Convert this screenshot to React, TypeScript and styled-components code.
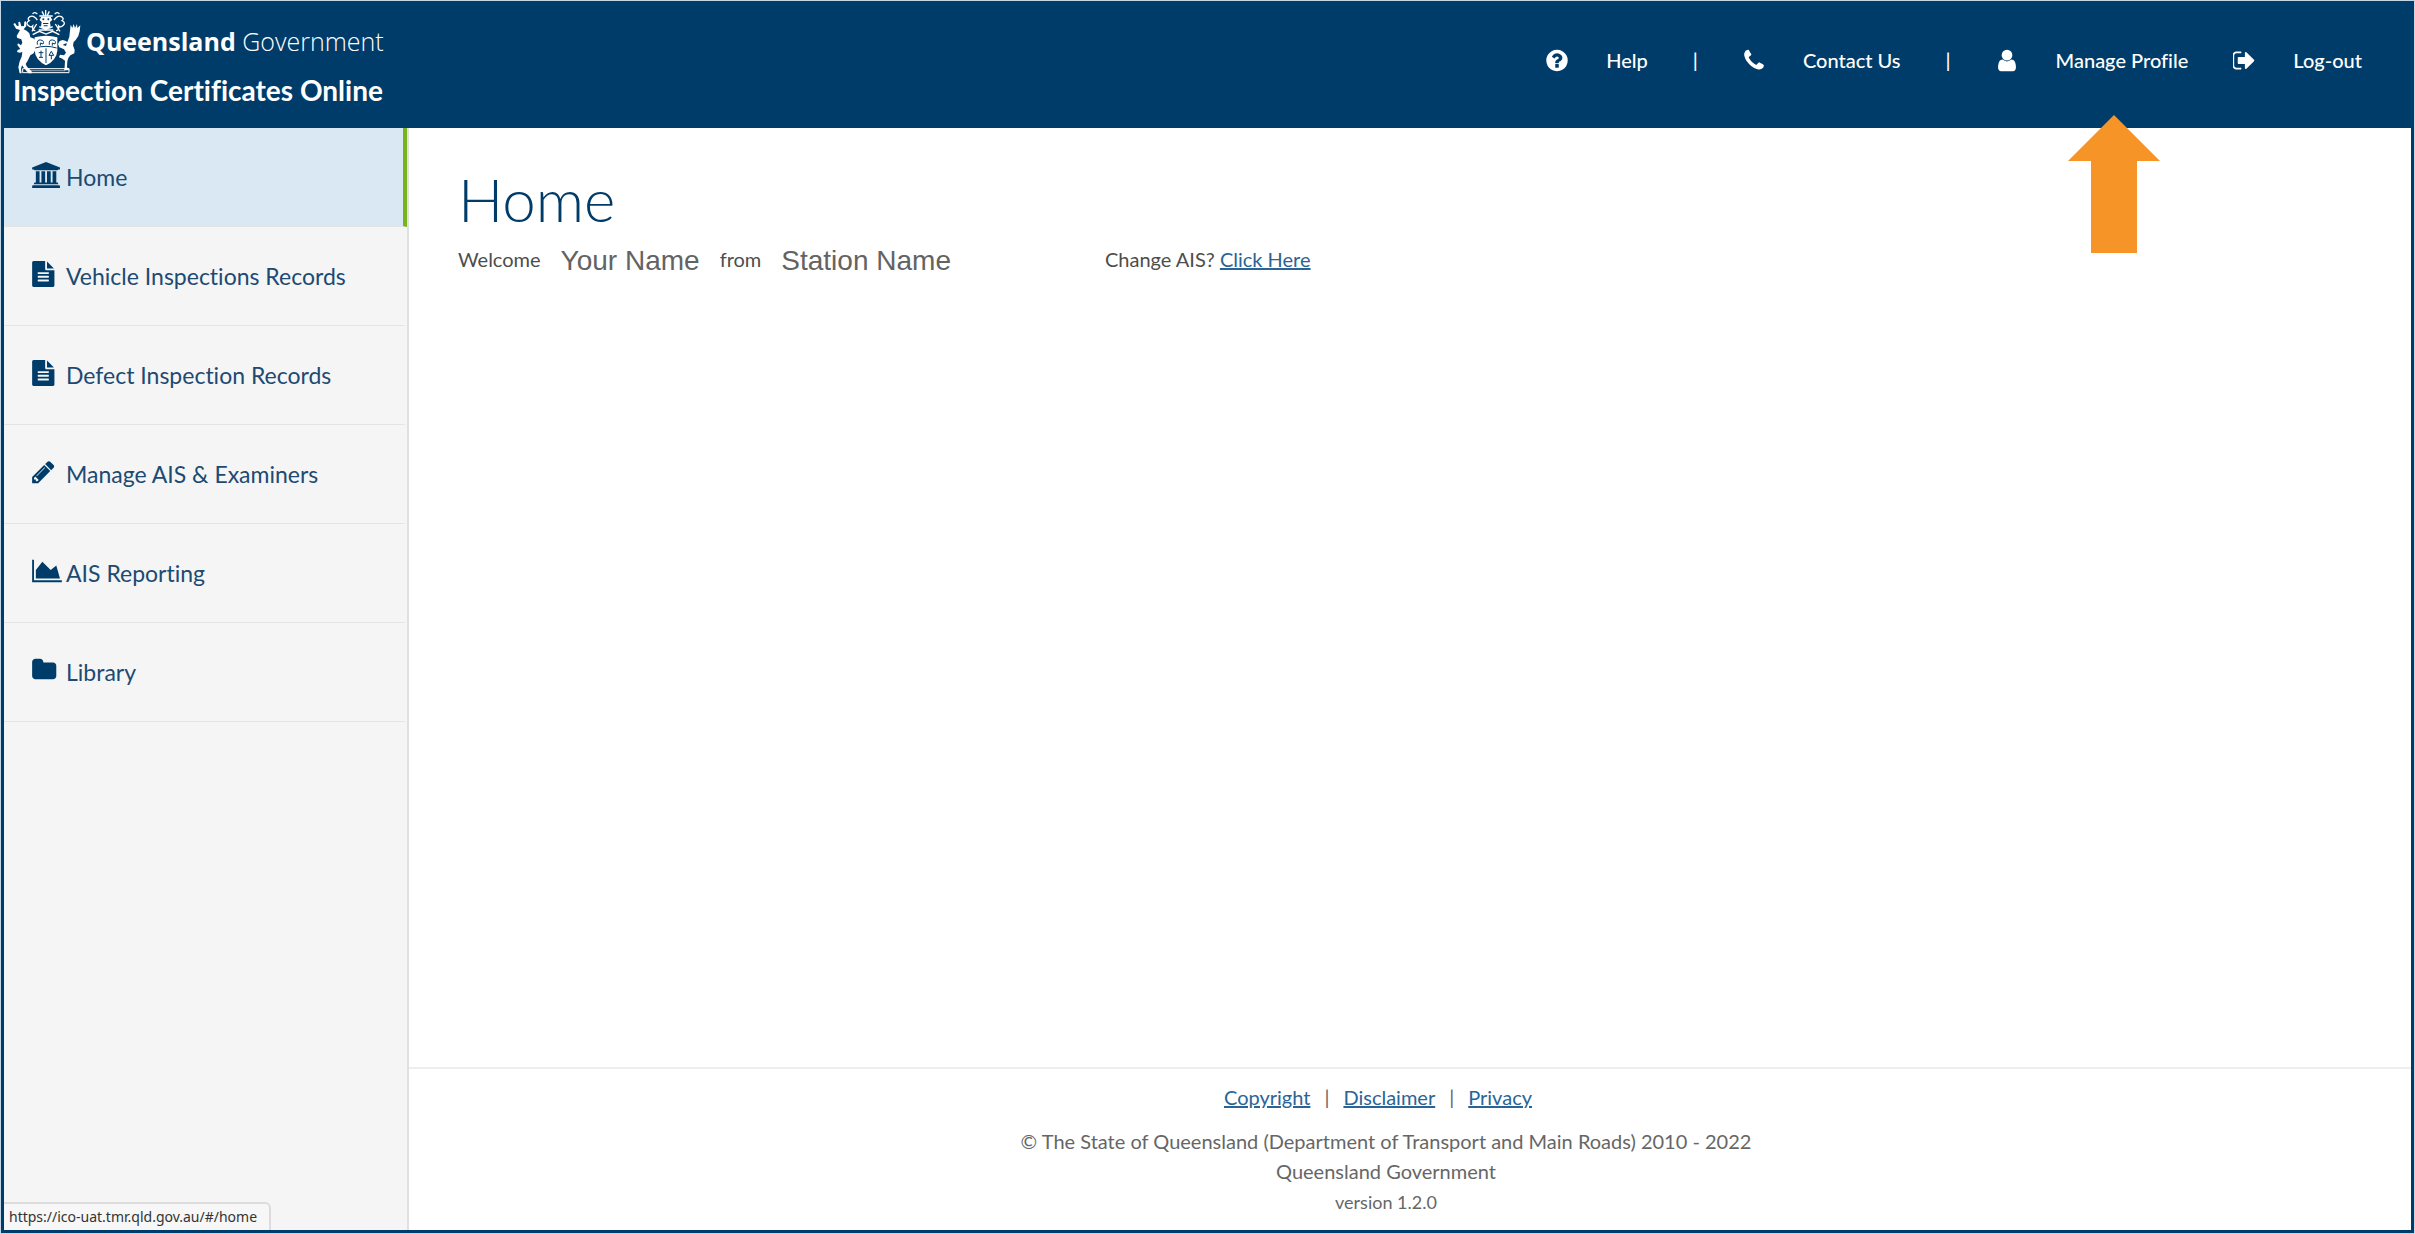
import React from "react";
import styled, { createGlobalStyle } from "styled-components";

const GlobalStyle = createGlobalStyle`
  *, *::before, *::after { box-sizing: border-box; }
  body {
    margin: 0;
    background: #ffffff;
    color: #4d4d4d;
    font-family: Lato, "Liberation Sans", sans-serif;
    font-size: 20px;
    line-height: 30px;
    font-variant-ligatures: none;
  }
`;

const navy = "#003c69";

const Page = styled.div`
  position: relative;
  display: flex;
  flex-direction: column;
  min-height: 100vh;
  border: 1px solid #c3d6e6;
  background: #ffffff;
`;

const Frame = styled.div`
  flex: 1;
  display: flex;
  flex-direction: column;
  border: 3px solid ${navy};
  border-top: 0;
`;

const Header = styled.header`
  display: flex;
  justify-content: space-between;
  align-items: flex-start;
  height: 127px;
  background: ${navy};
  color: #ffffff;
`;

const Brand = styled.div`
  padding: 6px 0 0 9px;
`;

const Logo = styled.div`
  display: flex;
  align-items: center;
  gap: 5px;
  font-family: "Open Sans", "Noto Sans", sans-serif;
  font-size: 25px;
  line-height: 68px;
  font-weight: 300;

  b { font-weight: 700; }
`;

const Product = styled.div`
  font-size: 28px;
  line-height: 30px;
  font-weight: 700;
`;

const Tools = styled.nav`
  display: flex;
  align-items: center;
  gap: 45px;
  padding: 44px 49px 0 0;
  font-weight: 500;
`;

const Tool = styled.a`
  display: flex;
  align-items: center;
  gap: 38px;
  color: #ffffff;
  text-decoration: none;
`;

const Body = styled.div`
  flex: 1;
  display: flex;
`;

const Sidebar = styled.nav`
  flex: 0 0 405px;
  background: #f5f5f5;
  border-right: 2px solid #e0e0e0;
`;

const Item = styled.a<{ $active?: boolean }>`
  display: flex;
  align-items: center;
  gap: 4px;
  height: 99px;
  padding-left: 28px;
  border-bottom: 1px solid #e4e4e4;
  border-right: 4px solid ${(p) => (p.$active ? "#76b41a" : "transparent")};
  background: ${(p) => (p.$active ? "#dae8f3" : "transparent")};
  color: #1c4a73;
  font-size: 23px;
  text-decoration: none;
`;

const ItemIcon = styled.svg`
  width: 30px;
  height: 26px;
  margin-bottom: 4px;
  fill: ${navy};
`;

const ToolIcon = styled.svg`
  width: 22px;
  height: 25px;
  fill: #ffffff;
`;

const Main = styled.div`
  flex: 1;
  display: flex;
  flex-direction: column;
`;

const Content = styled.main`
  flex: 1;
  padding: 33px 50px 0 49px;
`;

const Title = styled.h1`
  margin: 0;
  color: ${navy};
  font-size: 60px;
  line-height: 76px;
  font-weight: 300;
`;

const Welcome = styled.div`
  display: flex;
  align-items: center;
  gap: 20px;
  line-height: 40px;
`;

const Name = styled.span`
  padding-top: 4px;
  color: #636363;
  font-family: "Liberation Sans", sans-serif;
  font-size: 28px;
`;

const Change = styled.span`
  margin-left: 134px;
`;

const Link = styled.a`
  color: #2a6496;
  text-decoration: underline;
`;

const Footer = styled.footer`
  display: flex;
  flex-direction: column;
  align-items: center;
  padding: 13px 48px 12px 0;
  border-top: 2px solid #eeeeee;
  color: #666666;
`;

const Links = styled.div`
  display: flex;
  gap: 14px;
  padding-right: 16px;
  margin-bottom: 14px;
`;

const Version = styled.small`
  font-size: 18px;
  line-height: 32px;
`;

const Status = styled.div`
  position: absolute;
  left: 3px;
  bottom: 3px;
  padding: 0 12px 0 5px;
  border: 2px solid #dcdcdc;
  border-width: 2px 2px 0 0;
  border-top-right-radius: 6px;
  background: #f7f7f7;
  color: #333333;
  font-family: "Noto Sans", "Open Sans", sans-serif;
  font-size: 14px;
  line-height: 26px;
`;

const Pointer = styled.svg`
  position: absolute;
  top: 114px;
  right: 254px;
  width: 92px;
  height: 138px;
  fill: #f79428;
`;

const docPath =
  "M1596 476q14 14 28 36h-472v-472q22 14 36 28zm-476 164h544v1056q0 40-28 68t-68 28h-1344q-40 0-68-28t-28-68v-1600q0-40 28-68t68-28h800v544q0 40 28 68t68 28zm160 736v-64q0-14-9-23t-23-9h-704q-14 0-23 9t-9 23v64q0 14 9 23t23 9h704q14 0 23-9t9-23zm0-256v-64q0-14-9-23t-23-9h-704q-14 0-23 9t-9 23v64q0 14 9 23t23 9h704q14 0 23-9t9-23zm0-256v-64q0-14-9-23t-23-9h-704q-14 0-23 9t-9 23v64q0 14 9 23t23 9h704q14 0 23-9t9-23z";

const items = [
  {
    label: "Home",
    x: 0,
    d: "M960 0l960 384v128h-128q0 26-20.5 45t-48.5 19h-1526q-28 0-48.5-19t-20.5-45h-128v-128zM256 640h256v768h128v-768h256v768h128v-768h256v768h128v-768h256v768h59q28 0 48.5 19t20.5 45v64h-1664v-64q0-26 20.5-45t48.5-19h59v-768zM1851 1600q28 0 48.5 19t20.5 45v128h-1920v-128q0-26 20.5-45t48.5-19h1782z",
  },
  { label: "Vehicle Inspections Records", x: 128, d: docPath },
  { label: "Defect Inspection Records", x: 128, d: docPath },
  {
    label: "Manage AIS & Examiners",
    x: 128,
    d: "M491 1536l91-91-235-235-91 91v107h128v128h107zm523-928q0-22-22-22-10 0-17 7l-542 542q-7 7-7 17 0 22 22 22 10 0 17-7l542-542q7-7 7-17zm-54-192l416 416-832 832h-416v-416zm683 96q0 53-37 90l-166 166-416-416 166-165q36-38 90-38 53 0 91 38l235 234q37 39 37 91z",
  },
  {
    label: "AIS Reporting",
    x: 0,
    d: "M2048 1536v128h-2048v-1536h128v1408h1920zm-384-1024l256 896h-1664v-576l448-576 576 576z",
  },
  {
    label: "Library",
    x: 64,
    d: "M1728 608v704q0 92-66 158t-158 66h-1216q-92 0-158-66t-66-158v-960q0-92 66-158t158-66h320q92 0 158 66t66 158v32h672q92 0 158 66t66 158z",
  },
];

const tools = [
  {
    label: "Help",
    divider: true,
    d: "M1024 1376v-192q0-14-9-23t-23-9h-192q-14 0-23 9t-9 23v192q0 14 9 23t23 9h192q14 0 23-9t9-23zm256-672q0-88-55.5-163t-138.5-116-170-41q-243 0-371 213-15 24 8 42l132 100q7 6 19 6 16 0 25-12 53-68 86-92 34-24 86-24 48 0 85.5 26t37.5 59q0 38-20 61t-68 45q-63 28-115.5 86.5t-52.5 125.5v36q0 14 9 23t23 9h192q14 0 23-9t9-23q0-19 21.5-49.5t54.5-49.5q32-18 49-28.5t46-35 44.5-48 28-60.5 12.5-81zm384 192q0 209-103 385.5t-279.5 279.5-385.5 103-385.5-103-279.5-279.5-103-385.5 103-385.5 279.5-279.5 385.5-103 385.5 103 279.5 279.5 103 385.5z",
  },
  {
    label: "Contact Us",
    divider: true,
    d: "M1600 1240q0 27-10 70.5t-21 68.5q-21 50-122 106-94 51-186 51-27 0-53-3.5t-57.5-12.5-47-14.5-55.5-20.5-49-18q-98-35-175-83-127-79-264-216t-216-264q-48-77-83-175-3-9-18-49t-20.5-55.5-14.5-47-12.5-57.5-3.5-53q0-92 51-186 56-101 106-122 25-11 68.5-21t70.5-10q14 0 21 3 18 6 53 76 11 19 30 54t35 63.5 31 53.5q3 4 17.5 25t21.5 35.5 7 28.5q0 20-28.5 50t-62 55-62 53-28.5 46q0 9 5 22.5t8.5 20.5 14 24 11.5 19q76 137 174 235t235 174q2 1 19 11.5t24 14 20.5 8.5 22.5 5q18 0 46-28.5t53-62 55-62 50-28.5q14 0 28.5 7t35.5 21.5 25 17.5q25 15 53.5 31t63.5 35 54 30q70 35 76 53 3 7 3 21z",
  },
  {
    label: "Manage Profile",
    divider: false,
    d: "M1536 1399q0 109-62.5 187t-150.5 78h-854q-88 0-150.5-78t-62.5-187q0-85 8.5-160.5t31.5-152 58.5-131 94-89 134.5-34.5q131 128 313 128t313-128q76 0 134.5 34.5t94 89 58.5 131 31.5 152 8.5 160.5zm-256-887q0 159-112.5 271.5t-271.5 112.5-271.5-112.5-112.5-271.5 112.5-271.5 271.5-112.5 271.5 112.5 112.5 271.5z",
  },
  {
    label: "Log-out",
    divider: false,
    d: "M704 1440q0 4 1 20t.5 26.5-3 23.5-10 19.5-20.5 6.5h-320q-119 0-203.5-84.5t-84.5-203.5v-704q0-119 84.5-203.5t203.5-84.5h320q13 0 22.5 9.5t9.5 22.5q0 4 1 20t.5 26.5-3 23.5-10 19.5-20.5 6.5h-320q-66 0-113 47t-47 113v704q0 66 47 113t113 47h312l11.5 1 11.5 3 8 5.5 7 9 2 13.5zm928-544q0 26-19 45l-544 544q-19 19-45 19t-45-19-19-45v-288h-448q-26 0-45-19t-19-45v-384q0-26 19-45t45-19h448v-288q0-26 19-45t45-19 45 19l544 544q19 19 19 45z",
  },
];

/* State coat of arms: red deer and brolga holding the shield, helm above, scroll below. */
const CoatOfArms = () => (
  <svg width="68" height="65" viewBox="41 21 204 195" fill="#fff" aria-hidden="true">
    {/* deer */}
    <path d="M62 84l-12-4-8-14 5-3 6 9 5-1-1-11 5-1 4 14 8-1 1-13 5-1 1 14-8 10 9 4 8 8 3 12 12 4 4 8v22l-6 14-10 6-8 16-6 10 4 8 14 14v6h-9l-14-16-6-8-3 10 2 14h-6l-4-18 4-18 6-14 2-14-8 2-8-2 2-6 8-3-9-12 2-5 9 6 4-8-3-10-12-4-2-6z" />
    {/* brolga */}
    <path d="M214 68l5 10 4-12 4 12 6-12 1 12 9-8-2 18-4 14-8 12-6 6-2 10 5 14-1 10-12 6-6 8-3 10-1 18 9 9h-18l2-9 1-20-8-6-10-4 3-8 12 2 6-8-6-10-14-6-4-10 5-9 9-3 10 3 6 6-10 2-6 4 10 3 4-12 6-16z" />
    {/* crest and mantling */}
    <g fill="none" stroke="#fff" strokeWidth="4">
      <path d="M114 54q-12-16-22-10t-2 12q-12 6-4 14t14 2q-2 14 8 14M164 54q12-16 22-10t2 12q12 6 4 14t-14 2q2 14-8 14" />
      <path d="M114 36q-10-8-14 0M166 36q10-8 14 0M112 66l-14 22M168 66l14 22M100 98l20-10 20 8 20-8 20 10" />
      <path d="M139 24v18M128 28l6 12M150 28l-6 12M120 42l40 0M122 52q18 10 36 0M120 74q20 12 40 0M118 84l44 0" />
    </g>
    <path d="M126 44h28l4 10-6 6 2 14-15 12-14-12 2-14-6-6z" />
    <g fill={navy}>
      <circle cx="132" cy="52" r="3" />
      <circle cx="147" cy="52" r="3" />
      <path d="M131 63h16v3h-16zM133 70h12v3h-12z" />
    </g>
    {/* shield */}
    <path d="M106 106q34-10 68 0v40q-2 28-34 44q-32-16-34-44z" />
    <g fill="none" stroke={navy} strokeWidth="3">
      <path d="M108 138q32-10 64 0M140 139v44" />
      <path d="M114 128q-2-16 10-14t7 12l-8-3v8M150 128q-2-16 10-14t7 12l-8-3v8" />
      <path d="M118 152h14M125 146v20M119 166h12M149 160l7-12 7 12zM156 160v12" />
    </g>
    {/* compartment */}
    <path fill="none" stroke="#fff" strokeWidth="3" d="M70 200h139v12H70z" />
    <path d="M80 204h118v4H80z" opacity="0.45" />
  </svg>
);

const App = () => (
  <>
    <GlobalStyle />
    <Page>
      <Frame>
        <Header>
          <Brand>
            <Logo>
              <CoatOfArms />
              <span>
                <b>Queensland</b> Government
              </span>
            </Logo>
            <Product>Inspection Certificates Online</Product>
          </Brand>
          <Tools aria-label="Account">
            {tools.map((t) => (
              <React.Fragment key={t.label}>
                <Tool href="#">
                  <ToolIcon viewBox="128 0 1536 1792" aria-hidden="true">
                    <path d={t.d} />
                  </ToolIcon>
                  {t.label}
                </Tool>
                {t.divider && <span>|</span>}
              </React.Fragment>
            ))}
          </Tools>
        </Header>
        <Body>
          <Sidebar aria-label="Main">
            {items.map((it, i) => (
              <Item key={it.label} href="#" $active={i === 0}>
                <ItemIcon viewBox={`${it.x} 0 2048 1792`} aria-hidden="true">
                  <path d={it.d} />
                </ItemIcon>
                {it.label}
              </Item>
            ))}
          </Sidebar>
          <Main>
            <Content>
              <Title>Home</Title>
              <Welcome>
                <span>Welcome</span>
                <Name>Your Name</Name>
                <span>from</span>
                <Name>Station Name</Name>
                <Change>
                  Change AIS? <Link href="#">Click Here</Link>
                </Change>
              </Welcome>
            </Content>
            <Footer>
              <Links>
                <Link href="#">Copyright</Link>
                <span>|</span>
                <Link href="#">Disclaimer</Link>
                <span>|</span>
                <Link href="#">Privacy</Link>
              </Links>
              <span>© The State of Queensland (Department of Transport and Main Roads) 2010 - 2022</span>
              <span>Queensland Government</span>
              <Version>version 1.2.0</Version>
            </Footer>
          </Main>
        </Body>
      </Frame>
      <Status>https://ico-uat.tmr.qld.gov.au/#/home</Status>
      <Pointer viewBox="0 0 92 138" aria-hidden="true">
        <path d="M46 0l46 46H69v92H23V46H0z" />
      </Pointer>
    </Page>
  </>
);

export default App;
